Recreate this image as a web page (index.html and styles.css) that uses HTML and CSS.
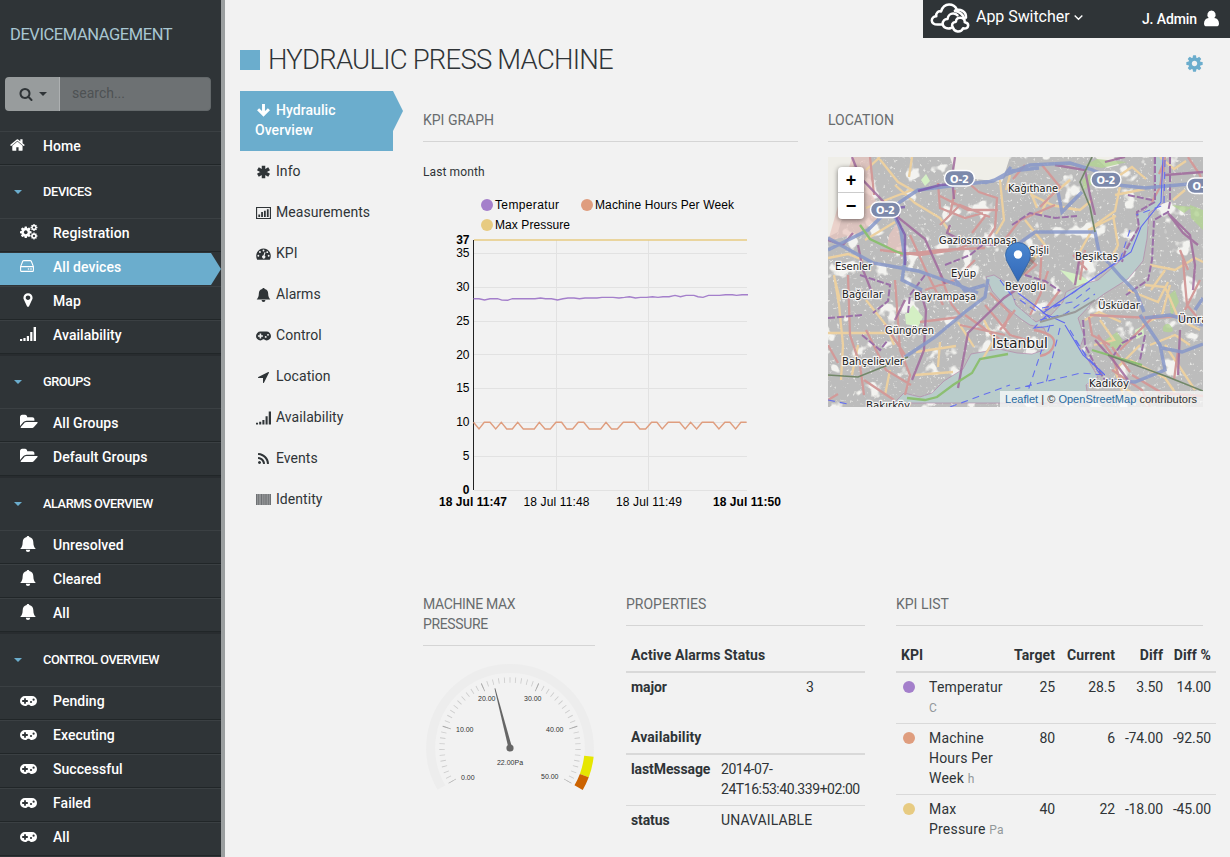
FILE: index.html
```html
<!DOCTYPE html>
<html lang="en">
<head>
<meta charset="utf-8">
<title>Device Management</title>
<link rel="stylesheet" href="styles.css">
</head>
<body>
<svg class="sprite" aria-hidden="true">
  <symbol id="i-home" viewBox="0 0 1792 1792"><path d="M1408 992v480q0 26-19 45t-45 19h-384v-384h-256v384h-384q-26 0-45-19t-19-45v-480q0-1 .5-3t.5-3l575-474 575 474q1 2 1 6zm223-69l-62 74q-8 9-21 11h-3q-13 0-21-7l-692-577-692 577q-12 8-24 7-13-2-21-11l-62-74q-8-10-7-23.5t11-21.5l719-599q32-26 76-26t76 26l244 204v-195q0-14 9-23t23-9h192q14 0 23 9t9 23v408l219 182q10 8 11 21.5t-7 23.5z"/></symbol>
  <symbol id="i-search" viewBox="0 0 1792 1792"><path d="M1216 832q0-185-131.5-316.5t-316.5-131.5-316.5 131.5-131.5 316.5 131.5 316.5 316.5 131.5 316.5-131.5 131.5-316.5zm512 832q0 52-38 90t-90 38q-54 0-90-38l-343-342q-179 124-399 124-143 0-273.5-55.5t-225-150-150-225-55.500-273.500 55.500-273.500 150-225 225-150 273.500-55.500 273.500 55.500 225 150 150 225 55.500 273.500q0 220-124 399l343 343q37 37 37 90z"/></symbol>
  <symbol id="i-cog" viewBox="0 0 1792 1792"><path d="M1152 896q0-106-75-181t-181-75-181 75-75 181 75 181 181 75 181-75 75-181zm512-109v222q0 12-8 23t-20 13l-185 28q-19 54-39 91 35 50 107 138 10 12 10 25t-9 23q-27 37-99 108t-94 71q-12 0-26-9l-138-108q-44 23-91 38-16 136-29 186-7 28-36 28h-222q-14 0-24.500-8.500t-11.500-21.500l-28-184q-49-16-90-37l-141 107q-10 9-25 9-14 0-25-11-126-114-165-168-7-10-7-23 0-12 8-23 15-21 51-66.500t54-70.500q-27-50-41-99l-183-27q-13-2-21-12.500t-8-23.500v-222q0-12 8-23t19-13l186-28q14-46 39-92-40-57-107-138-10-12-10-24 0-10 9-23 26-36 98.500-107.500t94.500-71.500q13 0 26 10l138 107q44-23 91-38 16-136 29-186 7-28 36-28h222q14 0 24.500 8.500t11.500 21.500l28 184q49 16 90 37l142-107q9-9 24-9 13 0 25 10 129 119 165 170 7 8 7 22 0 12-8 23-15 21-51 66.500t-54 70.500q26 50 41 98l183 28q13 2 21 12.500t8 23.500z"/></symbol>
  <symbol id="i-cogs" viewBox="0 0 18 16"><use href="#i-cog" x="-1" y="1.500" width="13.500" height="13.500"/><use href="#i-cog" x="10" y="-.5" width="8" height="8"/><use href="#i-cog" x="10" y="8" width="8" height="8"/></symbol>
  <symbol id="i-drive" viewBox="0 0 14 12"><path d="M.6 6.600 2.700 1.300Q3 .6 3.800.6h6.400q.8 0 1.100.7l2.100 5.300v3.800q0 1-1 1H1.600q-1 0-1-1zM.6 6.600h12.800" fill="none" stroke="currentColor" stroke-width="1.100"/><circle cx="8.500" cy="9" r=".8"/><circle cx="11" cy="9" r=".8"/></symbol>
  <symbol id="i-pin" viewBox="0 0 1792 1792"><path d="M1152 640q0-106-75-181t-181-75-181 75-75 181 75 181 181 75 181-75 75-181zm256 0q0 109-33 179l-364 774q-16 33-47.500 52t-67.500 19-67.500-19-46.500-52l-365-774q-33-70-33-179 0-212 150-362t362-150 362 150 150 362z"/></symbol>
  <symbol id="i-signal" viewBox="0 0 16 14"><path d="M0 12h2.200v2H0zM3.400 11h2.200v3H3.400zM6.800 9H9v5H6.800zM10.200 5h2.200v9h-2.200zM13.600 0H16v14h-2.400z"/></symbol>
  <symbol id="i-folder" viewBox="0 128 1920 1536"><path d="M1879 952q0 31-31 66l-336 396q-43 51-120.500 86.500t-143.500 35.500h-1088q-34 0-60.500-13t-26.500-43q0-31 31-66l336-396q43-51 120.500-86.500t143.500-35.500h1088q34 0 60.500 13t26.500 43zm-343-344v160h-832q-94 0-197 47.500t-164 119.500l-337 396-5 6q0-4-.5-12.500t-.5-12.500v-960q0-92 66-158t158-66h320q92 0 158 66t66 158v32h544q92 0 158 66t66 158z"/></symbol>
  <symbol id="i-bell" viewBox="0 0 16 16"><path d="M8 0c.8 0 1.300.4 1.300 1.100 2.700.6 3.900 2.500 4 5 .1 3.700.9 5.400 2.500 6.900H.2C1.800 11.500 2.600 9.800 2.700 6.100c.1-2.500 1.300-4.400 4-5C6.700.4 7.200 0 8 0zM5.800 13.700h4.400a2.200 2.200 0 0 1-4.400 0z"/></symbol>
  <symbol id="i-pad" viewBox="0 0 17 10"><path fill-rule="evenodd" d="M5 0h7a5 5 0 0 1 0 10c-1.300 0-2-.5-2.800-1.300H7.800C7 9.500 6.300 10 5 10A5 5 0 0 1 5 0zM4.100 2.200v1.900H2.200v1.800h1.900v1.900h1.800V5.900h1.900V4.100H5.900V2.200zM11 4.900a1.100 1.100 0 1 0 .01 2.200A1.100 1.100 0 0 0 11 4.900zM13.600 2.600a1.100 1.100 0 1 0 .01 2.200 1.100 1.100 0 0 0-.01-2.200z"/></symbol>
  <symbol id="i-down" viewBox="0 0 14 14"><path d="M7 1v11M1.600 6.200 7 11.600l5.400-5.400" fill="none" stroke="currentColor" stroke-width="2.900"/></symbol>
  <symbol id="i-asterisk" viewBox="0 0 14 14"><path d="M7 .8v12.400M1.400 3.700l11.200 6.600M12.600 3.700 1.400 10.300" fill="none" stroke="currentColor" stroke-width="3.500"/></symbol>
  <symbol id="i-bars" viewBox="0 0 16 13"><path d="M.6.6h14.800v11.800H.6z" fill="none" stroke="currentColor" stroke-width="1.200"/><path d="M2.500 8h1.900v2.700H2.500zM5.500 5.500h1.900v5.200H5.500zM8.500 4h1.900v6.700H8.500zM11.600 2.600h1.900v8.100h-1.900z"/></symbol>
  <symbol id="i-gauge" viewBox="0 0 16 12"><path fill-rule="evenodd" d="M8 0a8 8 0 0 1 6.700 12H1.300A8 8 0 0 1 8 0zM8 1.300a1 1 0 1 0 .01 2A1 1 0 0 0 8 1.300zM4.200 2.900a1 1 0 1 0 .01 2 1 1 0 0 0-.01-2zM2.500 6.800a1 1 0 1 0 .01 2 1 1 0 0 0-.01-2zM13.500 6.800a1 1 0 1 0 .01 2 1 1 0 0 0-.01-2zM12 3a1 1 0 1 0 .01 2A1 1 0 0 0 12 3zM9 4.200l-1 3.200a1.700 1.700 0 1 0 1.200.3l1-3.200z"/></symbol>
  <symbol id="i-arrow" viewBox="0 0 1792 1792"><path d="M1593 349l-640 1280q-17 35-57 35-5 0-15-2-22-5-35.500-22.500t-13.500-39.500v-576h-576q-22 0-39.500-13.500t-22.500-35.500 4-42 29-30l1280-640q13-7 29-7 27 0 45 19 15 14 18.500 34.500t-6.500 39.500z"/></symbol>
  <symbol id="i-rss" viewBox="0 0 1792 1792"><path d="M576 1344q0 80-56 136t-136 56-136-56-56-136 56-136 136-56 136 56 56 136zm512 123q2 28-17 48-18 21-47 21h-135q-25 0-43-16.500t-20-41.500q-22-229-184.500-391.500t-391.500-184.500q-25-2-41.500-20t-16.500-43v-135q0-29 21-47 17-17 43-17h5q160 13 306 80.500t259 181.500q114 113 181.500 259t80.500 306zm512 2q2 27-18 47-18 20-46 20h-143q-26 0-44.500-17.500t-19.500-42.500q-12-215-101-408.500t-231.500-336-336-231.500-408.500-102q-25-1-42.500-19.500t-17.500-43.500v-143q0-28 20-46 18-18 44-18h3q262 13 501.500 120t425.500 294q187 186 294 425.500t120 501.500z"/></symbol>
  <symbol id="i-barcode" viewBox="0 0 15 12"><path d="M0 0h15v11H0z" opacity=".5"/><path d="M0 0h1v11H0zM2 0h.7v11H2zM5 0h1v11H5zM7.500 0h.7v11h-.7zM9.500 0h1v11h-1zM12 0h.7v11H12zM14 0h1v11h-1z" opacity=".35"/></symbol>
  <symbol id="i-user" viewBox="0 0 16 17"><path d="M8 0a4.400 4.600 0 0 1 3 8c3.300.3 5 2.600 5 6 0 1.800-1 2.800-2.800 2.800H2.800C1 16.800 0 15.800 0 14c0-3.400 1.700-5.700 5-6a4.400 4.600 0 0 1 3-8z"/></symbol>
</svg>

<aside class="sidebar">
  <div class="brand">DEVICEMANAGEMENT</div>
  <div class="search">
    <span class="search-btn"><svg class="ico-search"><use href="#i-search"/></svg><i class="caret"></i></span>
    <span class="search-input">search...</span>
  </div>
  <nav class="menu">
    <a class="item home"><svg><use href="#i-home"/></svg>Home</a>
    <h4 class="first"><i class="caret"></i>DEVICES</h4>
    <a class="item"><svg class="w18"><use href="#i-cogs"/></svg>Registration</a>
    <a class="item active"><svg class="drive"><use href="#i-drive"/></svg>All devices</a>
    <a class="item"><svg><use href="#i-pin"/></svg>Map</a>
    <a class="item"><svg class="signal"><use href="#i-signal"/></svg>Availability</a>
    <h4><i class="caret"></i>GROUPS</h4>
    <a class="item"><svg class="w18"><use href="#i-folder"/></svg>All Groups</a>
    <a class="item"><svg class="w18"><use href="#i-folder"/></svg>Default Groups</a>
    <h4><i class="caret"></i>ALARMS OVERVIEW</h4>
    <a class="item"><svg><use href="#i-bell"/></svg>Unresolved</a>
    <a class="item"><svg><use href="#i-bell"/></svg>Cleared</a>
    <a class="item"><svg><use href="#i-bell"/></svg>All</a>
    <h4><i class="caret"></i>CONTROL OVERVIEW</h4>
    <a class="item"><svg class="pad"><use href="#i-pad"/></svg>Pending</a>
    <a class="item"><svg class="pad"><use href="#i-pad"/></svg>Executing</a>
    <a class="item"><svg class="pad"><use href="#i-pad"/></svg>Successful</a>
    <a class="item"><svg class="pad"><use href="#i-pad"/></svg>Failed</a>
    <a class="item"><svg class="pad"><use href="#i-pad"/></svg>All</a>
  </nav>
</aside>

<main class="main">
  <header class="topbar">
    <div class="userbar">
      <svg class="logo" viewBox="0 0 40 32"><g fill="none" stroke="#fff" stroke-width="2.500" stroke-linejoin="round" stroke-linecap="round"><path d="M12 22.500H7.500C4 22.500 1.800 21 1.800 18.500c0-2.700 2.200-4.200 4.500-4.200C5.500 11 8.500 8.500 11 9.500 12.500 5 15.500 2.600 19 2.600c3.500 0 6.500 2 8 5.200"/><path d="M25 8.700c5-2.500 11.500.8 11 7"/><path d="M25 9c4.500.5 8 3.500 9.500 8"/><path d="M21 26c-3.500 1.200-8-.3-8.300-3.800-.2-3.300 2-5.400 4.800-5.200.5-3.500 3-5.600 6-5.400 1.500.1 3 .7 4 1.800"/><path d="M23 25.500c-2-2.500-.5-5.500 2.500-5.600M26 19.500c0-2.700 2-4 4.500-3.800 3 .2 4.500 2.300 4.200 4.500 2.500.2 3.600 1.700 3.500 3.500-.2 2.300-2.500 3.300-5.100 2.500-1 2.300-3 3.500-5.500 3.300-2-.2-4-1.500-4.600-4"/></g></svg>
      <span class="switcher">App Switcher</span>
      <svg class="chev" viewBox="0 0 8 6"><path d="M.6 1.200 4 4.600l3.400-3.400" fill="none" stroke="#fff" stroke-width="1.200"/></svg>
      <span class="user">J. Admin</span>
      <svg class="ico-user"><use href="#i-user"/></svg>
    </div>
  </header>
  <div class="titlebar">
    <i class="square"></i><h1>HYDRAULIC PRESS MACHINE</h1>
    <svg class="settings"><use href="#i-cog"/></svg>
  </div>
  <div class="content">
    <nav class="tabs">
      <a class="tab active"><svg><use href="#i-down"/></svg>Hydraulic Overview</a>
      <a class="tab"><svg><use href="#i-asterisk"/></svg>Info</a>
      <a class="tab"><svg><use href="#i-bars"/></svg>Measurements</a>
      <a class="tab"><svg><use href="#i-gauge"/></svg>KPI</a>
      <a class="tab"><svg><use href="#i-bell"/></svg>Alarms</a>
      <a class="tab"><svg><use href="#i-pad"/></svg>Control</a>
      <a class="tab"><svg><use href="#i-arrow"/></svg>Location</a>
      <a class="tab"><svg><use href="#i-signal"/></svg>Availability</a>
      <a class="tab"><svg><use href="#i-rss"/></svg>Events</a>
      <a class="tab"><svg><use href="#i-barcode"/></svg>Identity</a>
    </nav>
    <div class="board">
      <div class="row top">
        <section>
          <h2>KPI GRAPH</h2>
          <p class="period">Last month</p>
          <svg class="chart" viewBox="423 190 375 330">
            <circle cx="487" cy="205" r="6" fill="#a47fcb"/><text x="495" y="209" textLength="64">Temperatur</text>
            <circle cx="587" cy="205" r="6" fill="#df9d7e"/><text x="595" y="209" textLength="139">Machine Hours Per Week</text>
            <circle cx="487" cy="225" r="6" fill="#e7cb82"/><text x="495" y="229" textLength="75">Max Pressure</text>
            <path class="grid" d="M474 253.500H747M474 287.500H747M474 321.500H747M474 354.500H747M474 388.500H747M474 422.500H747M474 456.500H747M474 490.500H747M556.500 240V490M648.500 240V490"/>
            <path d="M473.500 240V490" stroke="#222"/>
            <path d="M474 240H747" stroke="#e7cb82" stroke-width="1.700"/>
            <path class="line" stroke="#a47fcb" d="M473.500 298.700H479l5.500 1.300 5.500-1.300h7.500l4.500 1.400 5.500.2 5-1.600h22.500l5.500-.7 5 .7h6l6 1.300 5.500-1.300 5-.7h6l5.500.7 5.500-.7h12l5-.6h11l6 .6 5.500-.6 5-.7 6 1.300 5-.6h6l6-.7 5.500.7 5-.7h6l6-1.300 5.500 1.300 5.500-1.300h8l4 1.300 5 .7 5.500-2h11l6-.7h7l4 .7 5.500-.7h6"/>
            <path class="line" stroke="#df9d7e" d="M473.500 422.300 479 429l5.300-6.700h5.700l5.700 6.700 5.600-6.700 5.400 6.700h5.600l5.400-6.700 5.600 6.700h11l5-6.700 5.700 6.700h5.300l5.700-6.700h5.600l5 6.700h6l5.700-6.700h5.400l5.600 6.700h11.400l5.300-6.700 5.600 6.700h5.700l6-6.700h11l5.600 6.700h5.700l6-6.700h5.300l5.300 6.700 6-6.700h11.400l5.600 6.700 5.400-6.700 6 6.700 5.600-6.700h11.100l5.600 6.700 6-6.700h5l5.700 6.700 5.300-6.700h5.700"/>
            <g text-anchor="end"><text class="b" x="469.500" y="244">37</text><text x="469.500" y="257">35</text><text x="469.500" y="291">30</text><text x="469.500" y="325">25</text><text x="469.500" y="359">20</text><text x="469.500" y="392">15</text><text x="469.500" y="426">10</text><text x="469.500" y="460">5</text><text class="b" x="469.500" y="494">0</text></g>
            <text class="b" x="439" y="506" textLength="68">18 Jul 11:47</text><text x="523.500" y="506" textLength="66">18 Jul 11:48</text><text x="616" y="506" textLength="66">18 Jul 11:49</text><text class="b" x="713" y="506" textLength="68">18 Jul 11:50</text>
          </svg>
        </section>
        <section>
          <h2>LOCATION</h2>
          <div class="map">
            <svg class="tiles" viewBox="828 157 375 250">
              <defs>
                <filter id="blocks" x="0" y="0" width="100%" height="100%"><feTurbulence type="fractalNoise" baseFrequency=".3" numOctaves="2" seed="7"/><feColorMatrix values="0 0 0 0 .9  0 0 0 0 .9  0 0 0 0 .87  7 0 0 0 -4.500"/></filter>
                <filter id="patches" x="0" y="0" width="100%" height="100%"><feTurbulence type="fractalNoise" baseFrequency=".05" numOctaves="3" seed="11"/><feColorMatrix values="0 0 0 0 .9  0 0 0 0 .9  0 0 0 0 .87  0 12 0 0 -7.600"/></filter>
                <linearGradient id="pin" x2="0" y2="1"><stop stop-color="#4a87d0"/><stop offset="1" stop-color="#3368b8"/></linearGradient>
              </defs>
              <path fill="#bcbcbc" d="M828 157h375v250H828z"/>
              <path fill="#fff" filter="url(#patches)" d="M828 157h375v250H828z"/>
              <path fill="#fff" filter="url(#blocks)" opacity=".75" d="M828 157h375v250H828z"/>
              <path fill="#efeee8" d="M828 157h26l-4 30-12 45-10 5zM950 157h60l-8 25-45-5zM1095 157h18l6 8-12 3z"/>
              <path fill="#e9c6bf" opacity=".7" d="M852 157h18l2 38 12 18-24 20-32 8zM889 235l8-12 6 30-16-5zM845 200l25-5 12 12-30 20z"/>
              <g fill="#b3d394"><path d="M1190 205l13 5v20l-12-12zM1085 165l12-6 30 3-25 6zM1172 205l20 2-8 6zM1169 295l6-5 4 12-8 15zM1163 327q4-6 8-1t0 6-8-1zM1105 340l12-8 8 12-12 6zM1082 180l8-6 2 10-8 6z" opacity=".8"/><path fill="#d4efc4" d="M921 180l5-6 4 7-5 5zM1135 330l8-4 1 9-8 4zM1060 270l20 5 15 10-18 2zM905 315l8-10 10 12-5 10-12-3z"/></g>
              <path fill="#b9cccb" stroke="#b070a0" stroke-opacity=".5" d="M1154 157v43l-9 10-9 3 3 14-14 22-5 12-22 19-15 4-17 8-3 10-12 13-15 7-20-17-8-21-14-9-8 2 6 14 15 17 14 11 9 6 14 3 4 9-4 13-12 4-15-1-18-4-28 5-8 15-19 12-12 12-12 4-16-4-10 10h195l-3-18 12-8-14-24-4-5 4-12-6-18 14-15 12-9 24-15 15-18 4-22 2-26 14-10 2-53z"/>
              <g class="rd" stroke="#ecd0a0"><path d="M878 157l20 25 14 8-16 6-30 12M895 185l20 18 25 15 10 14M866 170l14-13M912 157l-3 20M828 258l20-4 15 6M840 300l-5-20M834 275l5 30 4 40-2 35M828 333h72M866 300l20 25 8 20M858 345l-6 30M916 352l40-6M915 375l38-3M890 370l-5 25M940 342l-2 25M1000 180l4 40-8 14M1032 195l20 10 25 5M1037 208l-8-20M1025 220l20 25-12 15M1052 195l18-15M1050 205l30 5 12-10M1075 260l20-35 20-14 5-25M1088 230l28-14M1113 215l5 30-10 20M1120 175l12-8 14 12M1115 195l30-6M1040 215l10-20M1150 265l25 5 20-12 8 4M1165 270l-14 20M1160 157l14 12 12-8M1173 200l12-10M1170 285l-8 30-20 10M1145 285l20 2 15 35M1150 345l25-10 15 10M1140 345l-25 25 10 30M1100 320l14 20-20 5M1085 320l14-8 22 10M1130 360l35 18 20 29M1120 385l30 20M1165 345l30 45M1180 320l20 10M984 320l10 20-12 20M958 322l16 25M1010 175l-4 15M828 375l-5 5M865 240l30-18M1128 290l30 12 10-20"/></g>
              <g class="rd" stroke="#d29a99"><path d="M870 157l4 38M938 183l2 25 25 10 18-5M940 225l20-20 30 12M955 190l-5 25M938 195l30 15h30M965 180l14 12 18 6-2 30-10 15M986 215l-14 18M910 235l18 40 15 30M880 250l40 5 35-5 20-8M848 275l2 60 10 30 4 30M828 345l10 18M866 330l20 40 25 15M895 280l5 70 10 25-5 20M885 325l20 30M900 255l40-5 45-2M925 290l30-10 20-20M920 322l40-5M940 275l12 30 10 12M985 305l25 30 20 6M960 325l45 10M965 315l40 28M990 293l20 20-6 15M1000 330l15-20M1055 205l-35 15-14 18M1042 165l18 22-20 20M1025 165l-12 14M1042 245l-2 35M1020 250l16 15-12 10M1080 280l5-30M1060 290l-15 20M1030 315l10-20 8-24M1087 270l-14-15M1165 160l-6 14M1188 157l12 18 3 10M1183 260l4 45 10 12M1180 250l8 20M1090 315l60 3 35-2M1098 335l14 20 10 30M1120 350l35-35M1112 370l30 20 8 17M1132 375l30 18 41 3M1110 345l-18-10-3-18M1200 280l-15 30M1165 157l-5 30-8 15M864 380l30 20M828 400l10-6M1178 350l-4 30M1130 372l-18-25M1034 330q22 4 20 14t-14 12"/></g>
              <g class="rd" stroke="#a06a9c" stroke-opacity=".85"><path d="M852 157l8 20 40 42 25 20 20 45M828 240l15 5 10-12M1022 286l-18 12-36 35-10 55M955 157l-3 20 2 22M950 225l-3 8 20 10 30 2M858 245l5 25 10 25M1125 157l-20 5M1055 165l30 5 5 25 5 20M1080 255l-5 30M1095 340l18 20 15 20M1170 215l20 20 5 30-2 25M1180 330l-2 45M1165 175l38-3M920 290l6 20-2 40-12 30M895 320l10-20M1168 213l15 20 15 12"/></g>
              <g class="rd dash" stroke="#9b70a8"><path d="M860 275l30 10-2 16-15 12M862 335l18 15 8-10M828 318l35-3M945 265l25-10 15-12M925 275l-15 20-2 18M1012 225l18-12 25 5 22-2M1128 195l24 5M1025 275l20 6 15 10M1155 157v45l-18 10 2 15-14 25-3 10M1170 157v45l-2 10-14 8-2 40-4 20-22 15M1083 320l2 25 10 20 10 15M1112 358l10-15 20-10M1145 335l-5 25"/></g>
              <g class="hw" stroke="#8798c9"><path d="M828 238l45 25 45 8 40 14 20 8M828 250l40-20 20-20 30-20 40-5 35-4 18-10 28-3M985 183l18-6 8-10M1005 175l25-10 40-2 20 6 20 8M1082 192l-20 20-4-20M893 212l8 18 4 30-3 20 20 10M1100 183l45 5 55-5M905 357l30-20 30-25 20-15 3-18M1010 250l25-18h60l4 20 22 25 15 15 8 20M1140 315l20 30 5 25-30 12-28-2M1145 318l25-3 33 10M1162 348l20 4 21-8M985 285l-20 6-10-12M1195 310l8-12"/></g>
              <path d="M905 207l-35 3M900 215l-25-8M895 215l10 20v30M918 191l22-6 30-2" fill="none" stroke="#7b59ad" stroke-opacity=".8" stroke-width="2.500"/>
              <path d="M860 225l10 14 25 12 8 3M907 398l18 2 12-3 16-12 19-12 8-14 28-5M1092 350l50 15" fill="none" stroke="#8cbf72" stroke-width="2.300"/>
              <path d="M1092 157l-12 25 10 25 5 25M828 375l30 2 50-20M1108 355l60 22 35 14" fill="none" stroke="#718768" stroke-width="1.600"/>
              <path d="M1163 157l-2 45-20 25-10 25-50 35-38 26 22 10M1065 325l18 30 22 20M1050 318l-12-10-20-15" fill="none" stroke="#6067ef" stroke-width="1.100"/>
              <path d="M1165 160l-1 45-28 10M1130 230l-10 30-50 35M1060 305l-15 5M1040 320l25-6 30-20M1035 328l20-3M1060 328l-14 55M1070 330l15 25 20 20-24-2-66 16M1050 325l-25 75M828 400l20 4M950 407l60-22M1075 340l28 38M1020 300l20 14M1000 280l15 20M1042 308l30-6 18-14M1046 316l-12 12 18-2" fill="none" stroke="#6570ee" stroke-width="1.100" stroke-dasharray="7 5"/>
              <path d="M1040 322l35-10 20-12" fill="none" stroke="#999" stroke-width="2"/>
              <g class="shield"><rect x="944.500" y="170.500" width="30" height="15.500" rx="7.700"/><rect x="870.500" y="202" width="30" height="15.500" rx="7.700"/><rect x="1091" y="172" width="30" height="15.500" rx="7.700"/><rect x="1187" y="178" width="30" height="15.500" rx="7.700"/><text x="950" y="182.500" textLength="19">O-2</text><text x="876" y="214" textLength="19">O-2</text><text x="1096.500" y="184" textLength="19">O-2</text><text x="1192.500" y="190" textLength="19">O-2</text></g>
              <g class="place"><text x="1008" y="192" textLength="50" lengthAdjust="spacingAndGlyphs">Kağıthane</text><text x="939" y="244" textLength="78" lengthAdjust="spacingAndGlyphs">Gaziosmanpaşa</text><text x="1029" y="254" textLength="20" lengthAdjust="spacingAndGlyphs">Şişli</text><text x="1075" y="260" textLength="43" lengthAdjust="spacingAndGlyphs">Beşiktaş</text><text x="835" y="270" textLength="37" lengthAdjust="spacingAndGlyphs">Esenler</text><text x="951" y="277" textLength="25" lengthAdjust="spacingAndGlyphs">Eyüp</text><text x="842" y="298" textLength="41" lengthAdjust="spacingAndGlyphs">Bağcılar</text><text x="914" y="300" textLength="62" lengthAdjust="spacingAndGlyphs">Bayrampaşa</text><text x="1005" y="290" textLength="41" lengthAdjust="spacingAndGlyphs">Beyoğlu</text><text x="1098" y="309" textLength="42" lengthAdjust="spacingAndGlyphs">Üsküdar</text><text x="1178" y="323">Ümraniye</text><text x="885" y="334" textLength="49" lengthAdjust="spacingAndGlyphs">Güngören</text><text class="city" x="992" y="348" textLength="56" lengthAdjust="spacingAndGlyphs">İstanbul</text><text x="842" y="365" textLength="62" lengthAdjust="spacingAndGlyphs">Bahçelievler</text><text x="1089" y="387" textLength="40" lengthAdjust="spacingAndGlyphs">Kadıköy</text><text x="866" y="409" textLength="44" lengthAdjust="spacingAndGlyphs">Bakırköy</text></g>
              <path d="M1018 281l16-19q4-5-2-5l-10 2z" fill="#333" opacity=".3"/>
              <path d="M1018 281.500l-9-16.500q-3.500-5-3.500-10a12.500 12.500 0 0 1 25 0q0 5-3.500 10z" fill="url(#pin)" stroke="#2e5fa0" stroke-width=".8"/><circle cx="1018" cy="254.500" r="4.200" fill="#fff"/>
            </svg>
            <div class="zoom"><span>+</span><span>−</span></div>
            <div class="credit"><a>Leaflet</a> | © <a>OpenStreetMap</a> contributors</div>
          </div>
        </section>
      </div>
      <div class="row bottom">
        <section>
          <h2 class="narrow">MACHINE MAX PRESSURE</h2>
          <svg class="gauge" viewBox="423 656 172 150">
            <path d="M441.400 787.600A79.300 79.300 0 1 1 578.600 787.600" stroke="#ededed" stroke-width="9"/>
            <path d="M588.900 756.300A79.300 79.300 0 0 1 584.300 775.600" stroke="#e6e600" stroke-width="9.500"/>
            <path d="M584.300 775.600A79.300 79.300 0 0 1 578.600 787.600" stroke="#cc6300" stroke-width="9.500"/>
            <path d="M451.100 782A68 68 0 1 1 568.900 782" stroke="#ccc" stroke-width="5.500" pathLength="500" stroke-dasharray="1.500 8.500" stroke-dashoffset=".75"/>
            <path d="M452.400 781.300A66.500 66.500 0 1 1 567.600 781.300" stroke="#aaa" stroke-width="8.500" pathLength="500" stroke-dasharray="1.600 98.400" stroke-dashoffset=".8"/>
            <path d="M494.500 688.500l.8-.2 16.700 59-3.500 1z" fill="#666"/><circle cx="510" cy="748" r="3.600" fill="#666"/>
            <text x="461" y="779.500">0.00</text><text x="456" y="732">10.00</text><text x="478" y="701">20.00</text><text x="524" y="701">30.00</text><text x="546" y="732">40.00</text><text x="541" y="779">50.00</text><text class="val" x="510" y="765" text-anchor="middle">22.00Pa</text>
          </svg>
        </section>
        <section class="props">
          <h2>PROPERTIES</h2>
          <table><colgroup><col class="c175"><col></colgroup><thead><tr><th colspan="2">Active Alarms Status</th></tr></thead><tbody><tr><th>major</th><td>3</td></tr></tbody></table>
          <table><colgroup><col class="c90"><col></colgroup><thead><tr><th colspan="2">Availability</th></tr></thead><tbody><tr><th>lastMessage</th><td class="stamp">2014-07-24T16:53:40.339+02:00</td></tr><tr><th>status</th><td>UNAVAILABLE</td></tr></tbody></table>
        </section>
        <section class="kpi">
          <h2>KPI LIST</h2>
          <table>
            <colgroup><col class="k1"><col class="k2"><col class="k3"><col class="k4"><col class="k5"><col class="k5"></colgroup>
            <thead><tr><th colspan="2">KPI</th><th>Target</th><th>Current</th><th>Diff</th><th>Diff %</th></tr></thead>
            <tbody>
              <tr><td><i class="dot violet"></i></td><td>Temperatur <small>C</small></td><td>25</td><td>28.5</td><td>3.50</td><td>14.00</td></tr>
              <tr><td><i class="dot orange"></i></td><td>Machine Hours Per Week <small>h</small></td><td>80</td><td>6</td><td>-74.00</td><td>-92.50</td></tr>
              <tr><td><i class="dot yellow"></i></td><td>Max Pressure <small>Pa</small></td><td>40</td><td>22</td><td>-18.00</td><td>-45.00</td></tr>
            </tbody>
          </table>
        </section>
      </div>
    </div>
  </div>
</main>
</body>
</html>
```
FILE: styles.css
```css
* { box-sizing: border-box; }
body { margin: 0; display: flex; width: 1230px; height: 857px; overflow: hidden; background: #f2f2f2; color: #2f3437; font: 14px/20px Roboto, "Liberation Sans", sans-serif; letter-spacing: .3px; }
svg { fill: currentColor; display: block; flex: none; }
h1, h2, h4, p { margin: 0; font-weight: 400; }
.sprite { position: absolute; width: 0; height: 0; }
.caret { width: 0; height: 0; border: 4px solid transparent; border-top-color: currentColor; border-bottom: 0; }

/* Sidebar */
.sidebar { width: 225px; flex: none; height: 857px; background: #2f3437; border-right: 4px solid #9b9fa0; color: #fff; overflow: hidden; }
.brand { padding: 25px 10px 0; height: 77px; color: #a9c7d2; font-size: 16.5px; letter-spacing: -.42px; }
.search { display: flex; margin: 0 10px 20px 5px; height: 34px; border-radius: 4px; overflow: hidden; }
.search-btn { width: 55px; background: #989c9d; color: #2f3437; display: flex; align-items: center; justify-content: center; gap: 6px; padding-left: 2px; border-right: 1px solid #adb0b1; }
.ico-search { width: 14px; height: 14px; }
.search-input { flex: 1; background: #6d7173; border: 1px solid #63686a; border-left: 0; color: #4e5254; padding: 5px 12px; letter-spacing: 0; border-radius: 0 4px 4px 0; }
.item { display: flex; align-items: center; height: 34px; border-top: 1px solid #3b4043; border-bottom: 1px solid #212628; padding: 0 0 4px 20px; font-weight: 500; letter-spacing: .05px; }
.item svg { width: 16px; height: 16px; margin: 0 17px 2px 0; }
.item svg.w18 { width: 18px; margin-right: 15px; }
.item svg.drive { width: 14px; height: 12px; margin-right: 19px; }
.item svg.signal { height: 14px; }
.item svg.pad { width: 17px; height: 10px; margin-right: 16px; margin-bottom: 0; }
.item.home { padding-left: 10px; }
.item.active { background: #6badcd; clip-path: polygon(0 1px, 211px 1px, 221px 17px, 211px 33px, 0 33px); }
.menu h4 { display: flex; align-items: center; height: 54px; padding: 0 0 0 14px; border-top: 2px solid #282c2f; font-size: 12.8px; font-weight: 500; letter-spacing: -.45px; }
.menu h4.first { height: 53px; border-top-width: 1px; border-color: #3b4043; letter-spacing: -.35px; }
.menu h4 .caret { color: #6badcd; margin-right: 21px; }

/* Header */
.main { flex: 1; min-width: 0; }
.topbar { display: flex; justify-content: flex-end; height: 38px; }
.userbar { display: flex; align-items: center; width: 307px; background: #2f3437; color: #fff; padding: 0 11px 0 7px; }
.logo { width: 40px; height: 32px; margin: 0 6px 2px 0; }
.switcher { font-size: 16px; padding-bottom: 4px; letter-spacing: -.05px; }
.chev { width: 9px; height: 7px; margin-left: 4px; margin-bottom: 3px; }
.user { margin-left: auto; margin-right: 7px; font-weight: 500; letter-spacing: -.1px; }
.ico-user { width: 15px; height: 17px; margin-bottom: 2px; }
.titlebar { display: flex; align-items: center; height: 53px; padding: 0 26px 10px 15px; }
.square { width: 20px; height: 20px; background: #6badcd; margin-right: 8px; }
.titlebar h1 { font-size: 27.5px; line-height: 32px; font-weight: 300; letter-spacing: -.78px; }
.settings { width: 19px; height: 19px; margin: 7px 0 0 auto; color: #6badcd; }

/* Device tabs */
.content { display: flex; padding-left: 15px; }
.tabs { width: 183px; flex: none; }
.tab { display: block; width: 163px; height: 41px; padding: 10px 20px 0 16px; letter-spacing: .05px; }
.tab svg { display: inline-block; vertical-align: -3px; width: 15px; height: 14px; margin-right: 5px; }
.tab.active { height: 60px; padding: 9px 45px 0 15px; background: #6badcd; color: #fff; font-weight: 500; clip-path: polygon(0 0, 153px 0, 163px 20px, 153px 40px, 153px 60px, 0 60px); }
.tab.active svg { margin-left: 1px; vertical-align: -2px; }

/* Dashboard */
.row { display: grid; }
.row.top { grid-template-columns: 375px 375px; column-gap: 30px; height: 484px; }
.row.bottom { grid-template-columns: 172px 239px 307px; column-gap: 31px; }
section { min-width: 0; }
h2 { font-size: 14px; line-height: 20px; padding: 19px 0 11px; border-bottom: 1px solid #d5d5d5; color: #686c6e; letter-spacing: 0; }
h2.narrow { padding-right: 60px; letter-spacing: -.35px; }
.period { font-size: 12px; padding: 20px 0 8px; letter-spacing: .1px; }
.chart { width: 375px; height: 330px; font: 12px "Liberation Sans", Arial, sans-serif; letter-spacing: 0; fill: #000; }
.chart .b { font-weight: 700; }
.chart .grid { stroke: #e2e2e2; }
.chart .line { fill: none; stroke-width: 1.4; }
.map { position: relative; height: 250px; margin-top: 15px; overflow: hidden; }
.tiles { width: 375px; height: 250px; }
.rd { fill: none; stroke-width: 2.3; }
.rd.dash { stroke-width: 2; stroke-dasharray: 7 2; }
.hw { fill: none; stroke-width: 3.4; stroke-opacity: .85; }
.shield { fill: #fff; font: 700 10px "DejaVu Sans", sans-serif; letter-spacing: 0; }
.shield rect { fill: #7c89ab; stroke: #fff; stroke-width: 1.5; }
.place { font: 11px "DejaVu Sans", sans-serif; letter-spacing: 0; fill: #222; paint-order: stroke; stroke: #fff; stroke-opacity: .85; stroke-width: 2.5px; stroke-linejoin: round; }
.place .city { font-size: 14.5px; }
.zoom { position: absolute; left: 10px; top: 10px; width: 26px; border-radius: 4px; background: #fff; box-shadow: 0 1px 5px rgba(0, 0, 0, .5); color: #000; font: 700 18px/26px "Liberation Sans", sans-serif; text-align: center; letter-spacing: 0; }
.zoom span { display: block; height: 26px; }
.zoom span:first-child { border-bottom: 1px solid #ccc; }
.credit { position: absolute; right: 0; bottom: 0; width: 203px; height: 16px; padding-left: 5px; background: rgba(255, 255, 255, .7); font: 11px/16px "Liberation Sans", sans-serif; letter-spacing: .02px; white-space: nowrap; color: #333; }
.credit a { color: #2a6ba0; }
.gauge { width: 172px; height: 150px; margin-top: 10px; font: 7px "Liberation Sans", sans-serif; letter-spacing: 0; }
.gauge path[stroke] { fill: none; }
.gauge text { fill: #333; }

/* Tables */
table { border-collapse: separate; border-spacing: 0; table-layout: fixed; width: 239px; margin-top: 14px; letter-spacing: .1px; }
th, td { padding: 4px 5px 6px; text-align: left; vertical-align: top; font-weight: 400; }
th { font-weight: 700; }
thead th { padding: 5px 5px 6px; border-bottom: 2px solid #d9d9d9; }
tbody tr + tr > * { border-top: 1px solid #d9d9d9; }
.props table + table { margin-top: 19px; }
.props tbody th { letter-spacing: -.1px; }
.c175 { width: 175px; }
.c90 { width: 90px; }
.stamp { letter-spacing: -.45px; }
.kpi table { width: 320px; }
.kpi tbody td:nth-child(2) { letter-spacing: .2px; }
.k1 { width: 28px; }
.k2 { width: 84px; }
.k3 { width: 52px; }
.k4 { width: 60px; }
.k5 { width: 48px; }
.kpi th, .kpi td { padding-left: 0; }
.kpi th:first-child, .kpi td:nth-child(2) { padding-left: 5px; }
.kpi td:nth-child(n+3), .kpi th:nth-child(n+2) { text-align: right; }
.kpi td:nth-child(n+3) { letter-spacing: -.15px; }
.kpi td:nth-child(2) { padding-right: 0; }
.dot { display: block; width: 12px; height: 12px; border-radius: 50%; margin: 4px 0 0 7px; }
.violet { background: #a47fcb; }
.orange { background: #df9d7e; }
.yellow { background: #e7cb82; }
small { font-size: 12px; line-height: 1; color: #92989a; }
```
